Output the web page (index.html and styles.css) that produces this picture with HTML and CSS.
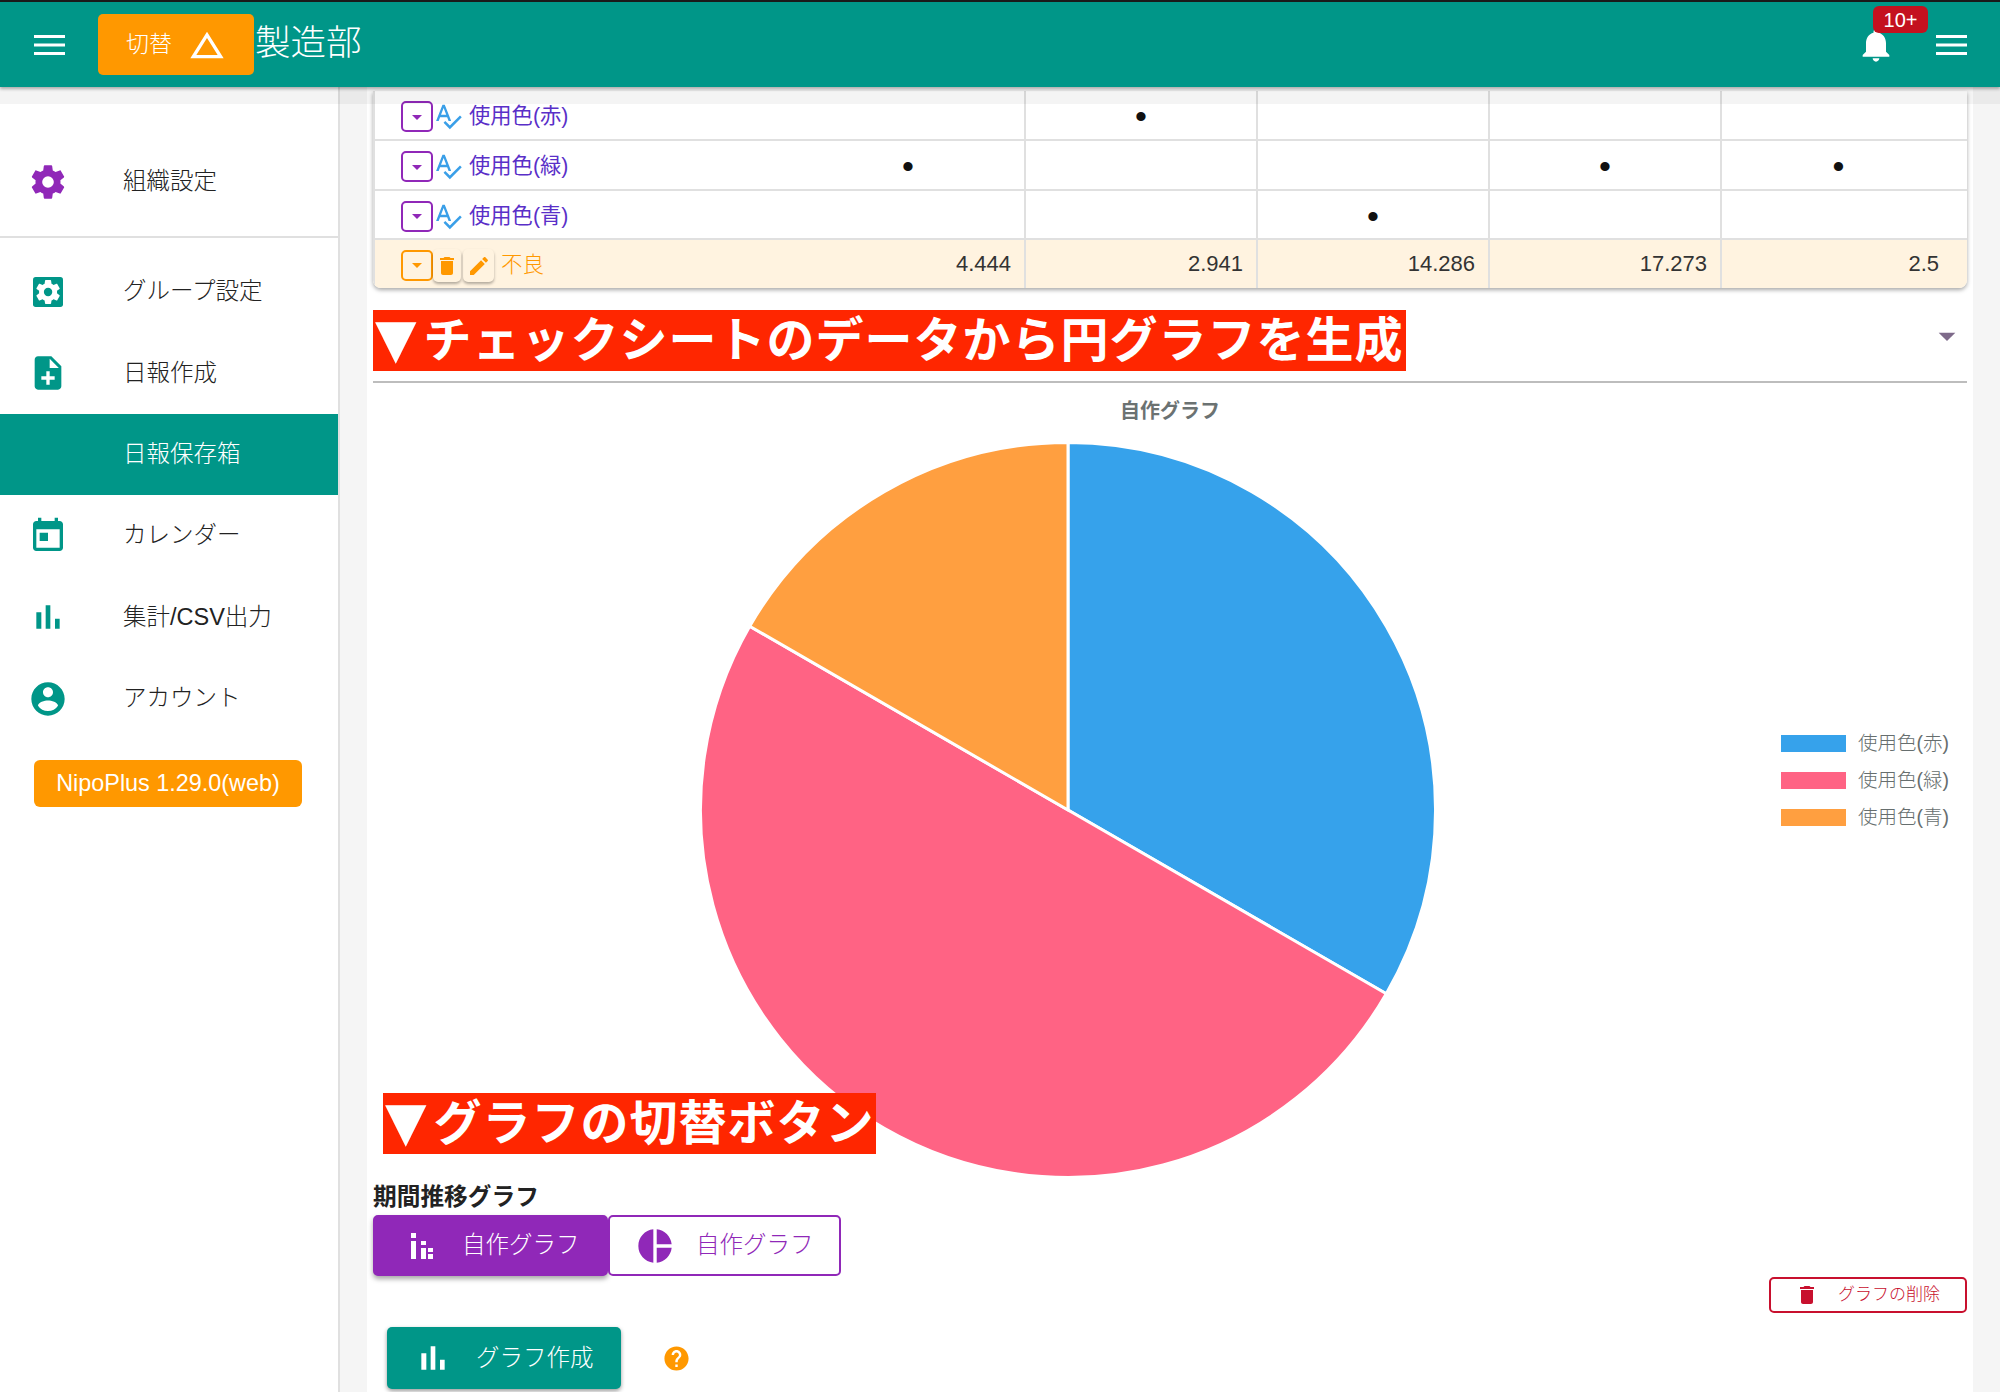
FILE: index.html
```html
<!DOCTYPE html>
<html lang="ja">
<head>
    <meta charset="UTF-8">
    <title>NipoPlus 日報保存箱</title>
    <link rel="stylesheet" href="styles.css">
</head>
<body>
    <svg class="defs">
        <symbol id="i-cog" viewBox="0 0 24 24"><path d="M12,15.5A3.5,3.5 0 0,1 8.5,12A3.5,3.5 0 0,1 12,8.5A3.5,3.5 0 0,1 15.5,12A3.5,3.5 0 0,1 12,15.5M19.43,12.97C19.47,12.65 19.5,12.33 19.5,12C19.5,11.67 19.47,11.34 19.43,11L21.54,9.37C21.73,9.22 21.78,8.95 21.66,8.73L19.66,5.27C19.54,5.05 19.27,4.96 19.05,5.05L16.56,6.05C16.04,5.66 15.5,5.32 14.87,5.07L14.5,2.42C14.46,2.18 14.25,2 14,2H10C9.75,2 9.54,2.18 9.5,2.42L9.13,5.07C8.5,5.32 7.96,5.66 7.44,6.05L4.95,5.05C4.73,4.96 4.46,5.05 4.34,5.27L2.34,8.73C2.21,8.95 2.27,9.22 2.46,9.37L4.57,11C4.53,11.34 4.5,11.67 4.5,12C4.5,12.33 4.53,12.65 4.57,12.97L2.46,14.63C2.27,14.78 2.21,15.05 2.34,15.27L4.34,18.73C4.46,18.95 4.73,19.03 4.95,18.95L7.44,17.94C7.96,18.34 8.5,18.68 9.13,18.93L9.5,21.58C9.54,21.82 9.75,22 10,22H14C14.25,22 14.46,21.82 14.5,21.58L14.87,18.93C15.5,18.67 16.04,18.34 16.56,17.94L19.05,18.95C19.27,19.03 19.54,18.95 19.66,18.73L21.66,15.27C21.78,15.05 21.73,14.78 21.54,14.63L19.43,12.97Z"/></symbol>
        <symbol id="i-cogbox" viewBox="0 0 24 24"><rect x="3" y="3" width="18" height="18" rx="1.6"/><g transform="translate(3.4 3.4) scale(.72)"><path fill="#fff" d="M12,15.5A3.5,3.5 0 0,1 8.5,12A3.5,3.5 0 0,1 12,8.5A3.5,3.5 0 0,1 15.5,12A3.5,3.5 0 0,1 12,15.5M19.43,12.97C19.47,12.65 19.5,12.33 19.5,12C19.5,11.67 19.47,11.34 19.43,11L21.54,9.37C21.73,9.22 21.78,8.95 21.66,8.73L19.66,5.27C19.54,5.05 19.27,4.96 19.05,5.05L16.56,6.05C16.04,5.66 15.5,5.32 14.87,5.07L14.5,2.42C14.46,2.18 14.25,2 14,2H10C9.75,2 9.54,2.18 9.5,2.42L9.13,5.07C8.5,5.32 7.96,5.66 7.44,6.05L4.95,5.05C4.73,4.96 4.46,5.05 4.34,5.27L2.34,8.73C2.21,8.95 2.27,9.22 2.46,9.37L4.57,11C4.53,11.34 4.5,11.67 4.5,12C4.5,12.33 4.53,12.65 4.57,12.97L2.46,14.63C2.27,14.78 2.21,15.05 2.34,15.27L4.34,18.73C4.46,18.95 4.73,19.03 4.95,18.95L7.44,17.94C7.96,18.34 8.5,18.68 9.13,18.93L9.5,21.58C9.54,21.82 9.75,22 10,22H14C14.25,22 14.46,21.82 14.5,21.58L14.87,18.93C15.5,18.67 16.04,18.34 16.56,17.94L19.05,18.95C19.27,19.03 19.54,18.95 19.66,18.73L21.66,15.27C21.78,15.05 21.73,14.78 21.54,14.63L19.43,12.97Z"/></g></symbol>
        <symbol id="i-note" viewBox="0 0 24 24"><path d="M14 2H6c-1.1 0-1.99.9-1.99 2L4 20c0 1.1.89 2 1.99 2H18c1.1 0 2-.9 2-2V8l-6-6zm2 14h-3v3h-2v-3H8v-2h3v-3h2v3h3v2zm-3-7V3.5L18.5 9H13z"/></symbol>
        <symbol id="i-event" viewBox="0 0 24 24"><path d="M19 3h-1V1h-2v2H8V1H6v2H5c-1.11 0-1.99.9-1.99 2L3 19c0 1.1.89 2 2 2h14c1.1 0 2-.9 2-2V5c0-1.1-.9-2-2-2zm0 16H5V8h14v11zM7 10h5v5H7z"/></symbol>
        <symbol id="i-bars" viewBox="0 0 24 24"><path d="M5 9.2h3V19H5zM10.6 5h2.8v14h-2.8zm5.6 8H19v6h-2.8z"/></symbol>
        <symbol id="i-account" viewBox="0 0 24 24"><path d="M12 2C6.48 2 2 6.48 2 12s4.48 10 10 10 10-4.48 10-10S17.52 2 12 2zm0 3c1.66 0 3 1.34 3 3s-1.34 3-3 3-3-1.34-3-3 1.34-3 3-3zm0 14.2c-2.5 0-4.71-1.28-6-3.22.03-1.99 4-3.08 6-3.08 1.99 0 5.97 1.09 6 3.08-1.29 1.94-3.5 3.22-6 3.22z"/></symbol>
        <symbol id="i-bell" viewBox="0 0 24 24"><path d="M12 22c1.1 0 2-.9 2-2h-4c0 1.1.9 2 2 2zm6-6v-5c0-3.07-1.63-5.64-4.5-6.32V4c0-.83-.67-1.5-1.5-1.5s-1.5.67-1.5 1.5v.68C7.64 5.36 6 7.92 6 11v5l-2 2v1h16v-1l-2-2z"/></symbol>
        <symbol id="i-delta" viewBox="0 0 24 24"><path d="M12 7.77L18.39 18H5.61L12 7.77M12 4L2 20h20L12 4z"/></symbol>
        <symbol id="i-pie" viewBox="0 0 24 24"><path d="M11 2v20c-5.07-.5-9-4.79-9-10s3.93-9.5 9-10zm2.03 0v8.99H22c-.47-4.74-4.24-8.52-8.97-8.99zm0 11.01V22c4.74-.47 8.5-4.25 8.97-8.99h-8.97z"/></symbol>
        <symbol id="i-help" viewBox="0 0 24 24"><path d="M12 2C6.48 2 2 6.48 2 12s4.48 10 10 10 10-4.48 10-10S17.52 2 12 2zm1 17h-2v-2h2v2zm2.07-7.75l-.9.92C13.45 12.9 13 13.5 13 15h-2v-.5c0-1.1.45-2.1 1.17-2.83l1.24-1.26c.37-.36.59-.86.59-1.41 0-1.1-.9-2-2-2s-2 .9-2 2H8c0-2.21 1.79-4 4-4s4 1.79 4 4c0 .88-.36 1.68-.93 2.25z"/></symbol>
        <symbol id="i-trash" viewBox="0 0 24 24"><path d="M6 19c0 1.1.9 2 2 2h8c1.1 0 2-.9 2-2V7H6v12zM19 4h-3.5l-1-1h-5l-1 1H5v2h14V4z"/></symbol>
        <symbol id="i-pencil" viewBox="0 0 24 24"><path d="M3 17.25V21h3.75L17.81 9.94l-3.75-3.75L3 17.25zM20.71 7.04c.39-.39.39-1.02 0-1.41l-2.34-2.34c-.39-.39-1.02-.39-1.41 0l-1.83 1.83 3.75 3.75 1.83-1.83z"/></symbol>
        <symbol id="i-caret" viewBox="0 0 24 24"><path d="M7 10l5 5 5-5z"/></symbol>
        <symbol id="i-spell" viewBox="0 0 24 24"><path d="M21.59,11.59L13.5,19.68L9.83,16L8.42,17.41L13.5,22.5L23,13M6.43,11L8.5,5.5L10.57,11M12.45,16H14.54L9.43,3H7.57L2.46,16H4.55L5.67,13H11.31L12.45,16Z"/></symbol>
        <symbol id="i-menu" viewBox="0 0 31 20"><path d="M0 0h31v3H0zM0 8.500h31v3H0zM0 17h31v3H0z"/></symbol>
        <symbol id="i-stack" viewBox="0 0 22 26"><path d="M0 0h5v5H0zM0 8h5v18H0zM10 8h5v4h-5zM10 15h5v11h-5zM17 15h5v4h-5zM17 21h5v5h-5z"/></symbol>
    </svg>

    <header class="topbar">
        <svg class="burger"><use href="#i-menu"/></svg>
        <button class="switch-btn"><span class="lbl">切替</span><svg class="icon-40"><use href="#i-delta"/></svg></button>
        <div class="dept">製造部</div>
        <div class="topbar-right">
            <div class="bell">
                <svg class="icon-40"><use href="#i-bell"/></svg>
                <span class="badge">10+</span>
            </div>
            <svg class="burger"><use href="#i-menu"/></svg>
        </div>
    </header>

    <div class="layout">
        <aside class="sidenav">
            <a class="nav-item"><svg class="icon-40 purple"><use href="#i-cog"/></svg><span class="lbl">組織設定</span></a>
            <div class="nav-divider"></div>
            <a class="nav-item"><svg class="icon-40"><use href="#i-cogbox"/></svg><span class="lbl">グループ設定</span></a>
            <a class="nav-item"><svg class="icon-40"><use href="#i-note"/></svg><span class="lbl">日報作成</span></a>
            <a class="nav-item active"><span class="icon-40"></span><span class="lbl">日報保存箱</span></a>
            <a class="nav-item"><svg class="icon-40"><use href="#i-event"/></svg><span class="lbl">カレンダー</span></a>
            <a class="nav-item"><svg class="icon-40"><use href="#i-bars"/></svg><span class="lbl">集計/CSV出力</span></a>
            <a class="nav-item"><svg class="icon-40"><use href="#i-account"/></svg><span class="lbl">アカウント</span></a>
            <div class="version">NipoPlus 1.29.0(web)</div>
        </aside>

        <main class="main">
            <div class="content">
                <div class="sheet">
                    <table class="sheet-table">
                        <colgroup>
                            <col class="col-label"><col class="col-num"><col class="col-num"><col class="col-num"><col class="col-num"><col class="col-last">
                        </colgroup>
                        <tr>
                            <td class="label-cell">
                                <div class="label-wrap">
                                    <span class="caret-box"><svg class="icon-24"><use href="#i-caret"/></svg></span>
                                    <svg class="icon-30 spell"><use href="#i-spell"/></svg>
                                    <span class="item-name">使用色(赤)</span>
                                </div>
                            </td>
                            <td class="no-line"></td>
                            <td class="dot">•</td>
                            <td></td>
                            <td></td>
                            <td></td>
                        </tr>
                        <tr>
                            <td class="label-cell">
                                <div class="label-wrap">
                                    <span class="caret-box"><svg class="icon-24"><use href="#i-caret"/></svg></span>
                                    <svg class="icon-30 spell"><use href="#i-spell"/></svg>
                                    <span class="item-name">使用色(緑)</span>
                                </div>
                            </td>
                            <td class="no-line dot">•</td>
                            <td></td>
                            <td></td>
                            <td class="dot">•</td>
                            <td class="dot">•</td>
                        </tr>
                        <tr class="short">
                            <td class="label-cell">
                                <div class="label-wrap">
                                    <span class="caret-box"><svg class="icon-24"><use href="#i-caret"/></svg></span>
                                    <svg class="icon-30 spell"><use href="#i-spell"/></svg>
                                    <span class="item-name">使用色(青)</span>
                                </div>
                            </td>
                            <td class="no-line"></td>
                            <td></td>
                            <td class="dot">•</td>
                            <td></td>
                            <td></td>
                        </tr>
                        <tr class="short total">
                            <td class="label-cell">
                                <div class="label-wrap">
                                    <span class="caret-box"><svg class="icon-24"><use href="#i-caret"/></svg></span>
                                    <span class="mini-btn"><svg class="icon-24"><use href="#i-trash"/></svg></span>
                                    <span class="mini-btn wide"><svg class="icon-24"><use href="#i-pencil"/></svg></span>
                                    <span class="total-name">不良</span>
                                </div>
                            </td>
                            <td class="no-line num">4.444</td>
                            <td class="num">2.941</td>
                            <td class="num">14.286</td>
                            <td class="num">17.273</td>
                            <td class="num end">2.5</td>
                        </tr>
                    </table>
                </div>

                <div class="section-head">
                    <svg class="icon-40 fold"><use href="#i-caret"/></svg>
                </div>

                <div class="chart">
                    <div class="chart-title">自作グラフ</div>
                    <div class="chart-body">
                        <!-- 2:3:1, starts at 12 o'clock -->
                        <svg class="pie" viewBox="-370 -370 740 740">
                            <path d="M0 0V-367.500A367.500 367.500 0 0 1 318.300 183.750Z" fill="#36a2eb" stroke="#fff" stroke-width="3"/>
                            <path d="M0 0L318.300 183.750A367.500 367.500 0 0 1 -318.300 -183.750Z" fill="#ff6384" stroke="#fff" stroke-width="3"/>
                            <path d="M0 0L-318.300 -183.750A367.500 367.500 0 0 1 0 -367.500Z" fill="#ff9f40" stroke="#fff" stroke-width="3"/>
                        </svg>
                        <ul class="legend">
                            <li><span class="swatch blue"></span><span class="lbl">使用色(赤)</span></li>
                            <li><span class="swatch pink"></span><span class="lbl">使用色(緑)</span></li>
                            <li><span class="swatch orange"></span><span class="lbl">使用色(青)</span></li>
                        </ul>
                    </div>
                </div>

                <div class="graph-label">期間推移グラフ</div>
                <div class="graph-tabs">
                    <button class="tab on"><svg class="icon-stack"><use href="#i-stack"/></svg><span class="lbl">自作グラフ</span></button>
                    <button class="tab"><svg class="icon-40"><use href="#i-pie"/></svg><span class="lbl">自作グラフ</span></button>
                </div>
                <div class="delete-row">
                    <button class="delete-btn"><svg class="icon-24"><use href="#i-trash"/></svg><span class="lbl">グラフの削除</span></button>
                </div>
                <div class="create-row">
                    <button class="create-btn"><svg class="icon-40"><use href="#i-bars"/></svg><span class="lbl">グラフ作成</span></button>
                    <svg class="help"><use href="#i-help"/></svg>
                </div>

                <div class="note note-top"><span class="tri">▼</span>チェックシートのデータから円グラフを生成</div>
                <div class="note note-bottom"><span class="tri">▼</span>グラフの切替ボタン</div>
            </div>
        </main>
    </div>
</body>
</html>
```

FILE: styles.css
```css
* {
    box-sizing: border-box;
}
html, body {
    margin: 0;
    height: 1392px;
    overflow: hidden;
}
body {
    font-family: "Liberation Sans", "Noto Sans CJK JP", sans-serif;
    font-weight: 300;
    font-size: 23.500px;
    color: #222;
    background: #fff;
}
button {
    font: inherit;
    cursor: pointer;
}
svg {
    fill: currentColor;
    flex: none;
    display: block;
}
.defs {
    display: none;
}
.icon-24 {
    width: 24px;
    height: 24px;
}
.icon-30 {
    width: 30px;
    height: 30px;
}
.icon-40 {
    width: 40px;
    height: 40px;
    flex: none;
    display: block;
}
.purple {
    color: #9028b8;
}
/* kana sit a little high next to the icons */
.lbl {
    margin-bottom: 5px;
}

/* top bar */
.topbar {
    position: relative;
    z-index: 5;
    height: 87px;
    padding: 0 33px 0 34px;
    display: flex;
    align-items: center;
    color: #fff;
    background: #009688;
    border-top: 2px solid #1a1a1a;
    box-shadow: 0 2px 3px rgba(0, 0, 0, 0.3), 0 17px 0 rgba(0, 0, 0, 0.045);
}
.burger {
    width: 31px;
    height: 20px;
}
.switch-btn {
    width: 156px;
    height: 61px;
    margin-left: 33px;
    padding: 0 0 0 28px;
    display: flex;
    align-items: center;
    gap: 15px;
    font-size: 23px;
    color: #fff;
    background: #ff9800;
    border: none;
    border-radius: 5px;
}
.dept {
    margin: 0 0 10px 1px;
    font-size: 35.500px;
}
.topbar-right {
    margin-left: auto;
    display: flex;
    align-items: center;
    gap: 40px;
}
.bell {
    position: relative;
    height: 40px;
}
.badge {
    position: absolute;
    left: 17px;
    top: -19px;
    width: 55px;
    height: 27px;
    line-height: 29px;
    text-align: center;
    font-size: 20px;
    background: #c4111f;
    border-radius: 6px;
}

.layout {
    display: flex;
    height: 1305px;
}

/* side menu */
.sidenav {
    width: 340px;
    flex: none;
    padding-top: 54px;
    background: #fff;
    border-right: 2px solid #e0e0e0;
}
.nav-item {
    height: 81.400px;
    padding-left: 28px;
    display: flex;
    align-items: center;
    gap: 55px;
    color: #009688;
}
.nav-item .lbl {
    color: #222;
}
.nav-item.active {
    background: #009688;
}
.nav-item.active .lbl {
    color: #fff;
}
.nav-item .purple {
    color: #9028b8;
}
.nav-divider {
    height: 2px;
    margin: 14px 0 12.600px;
    background: #e0e0e0;
}
.version {
    width: 268px;
    height: 47px;
    margin: 21px 0 0 34px;
    line-height: 47px;
    text-align: center;
    font-size: 23.400px;
    color: #fff;
    background: #ff9800;
    border-radius: 6px;
}

/* main column */
.main {
    flex: 1;
    padding: 0 27px;
    background: #f5f5f5;
}
.content {
    position: relative;
    height: 100%;
    padding: 4px 6px 0;
    background: #fff;
    overflow: hidden;
}

/* check sheet */
.sheet {
    border-radius: 0 0 8px 8px;
    box-shadow: 0 2px 4px rgba(0, 0, 0, 0.35);
    overflow: hidden;
}
.sheet-table {
    width: 1594px;
    table-layout: fixed;
    border-collapse: separate;
    border-spacing: 0;
}
.col-label {
    width: 419px;
}
.col-num {
    width: 232px;
}
.col-last {
    width: 247px;
}
.sheet-table td {
    height: 50px;
    padding: 0 13px 0 0;
    border-left: 2px solid #e0e0e0;
    border-bottom: 2px solid #e0e0e0;
}
.sheet-table .short td {
    height: 49px;
}
.sheet-table .total td {
    height: 48px;
    background: #fff3e0;
    border-bottom: none;
}
.sheet-table td.label-cell {
    padding: 0 0 0 26px;
}
.sheet-table td.no-line {
    border-left: none;
}
.sheet-table .dot {
    padding: 2px 0 0;
    text-align: center;
    font-size: 34px;
    line-height: 40px;
    color: #111;
}
.sheet-table .dot:last-child {
    padding-right: 12px;
}
.sheet-table .num {
    text-align: right;
    font-size: 22px;
    color: #333;
}
.sheet-table td.end {
    padding-right: 28px;
}
.label-wrap {
    display: flex;
    align-items: center;
}
.caret-box {
    width: 32px;
    height: 31px;
    margin-top: 3px;
    display: flex;
    align-items: center;
    justify-content: center;
    color: #9028b8;
    border: 2px solid #9028b8;
    border-radius: 5px;
}
.spell {
    margin-top: 2px;
    color: #3a9fe8;
}
.item-name {
    margin: 0 0 3px 6px;
    font-size: 21.300px;
    font-weight: 400;
    color: #5a2fc8;
}
.total .caret-box {
    margin-top: 2px;
    color: #ff9800;
    border-color: #ff9800;
}
.mini-btn {
    width: 28px;
    height: 33px;
    margin: 3px 0 0;
    display: flex;
    align-items: center;
    justify-content: center;
    color: #ff9800;
    border-radius: 5px;
    box-shadow: 0 2px 3px rgba(0, 0, 0, 0.3);
}
.mini-btn.wide {
    width: 31px;
    margin-left: 2px;
}
.total-name {
    margin: 0 0 3px 7px;
    font-size: 21.500px;
    color: #ff9800;
}

/* chart */
.section-head {
    height: 95px;
    padding-top: 28px;
    display: flex;
    justify-content: flex-end;
    border-bottom: 2px solid #bdbdbd;
}
.fold {
    color: #7e6a8a;
}
.chart-title {
    margin-top: 16px;
    line-height: 24px;
    text-align: center;
    font-size: 20px;
    font-weight: 700;
    color: #6b7272;
}
.chart-body {
    display: flex;
    padding-top: 17px;
}
.pie {
    width: 740px;
    height: 740px;
    margin-left: 325px;
}
.legend {
    margin: 285px 0 0 auto;
    padding: 0 18px 0 0;
    list-style: none;
    font-size: 19.500px;
    color: #666e6e;
}
.legend li {
    height: 37px;
    display: flex;
    align-items: center;
    gap: 12px;
}
.swatch {
    width: 65px;
    height: 17px;
}
.blue {
    background: #36a2eb;
}
.pink {
    background: #ff6384;
}
.orange {
    background: #ff9f40;
}

/* buttons below the chart */
.graph-label {
    margin-top: 2px;
    line-height: 30px;
    font-size: 23.700px;
    font-weight: 700;
    color: #222;
}
.graph-tabs {
    margin-top: 3px;
    display: flex;
}
.tab {
    width: 233px;
    height: 61px;
    padding: 0 0 0 25px;
    display: flex;
    align-items: center;
    gap: 21px;
    color: #9028b8;
    background: #fff;
    border: 2px solid #9028b8;
    border-radius: 5px;
}
.tab.on {
    width: 235px;
    padding-left: 36px;
    gap: 29px;
    color: #fff;
    background: #9028b8;
    box-shadow: 0 3px 5px rgba(0, 0, 0, 0.35);
}
.icon-stack {
    width: 22px;
    height: 26px;
}
.delete-row {
    margin-top: 1px;
    display: flex;
    justify-content: flex-end;
}
.delete-btn {
    width: 198px;
    height: 36px;
    padding: 0 0 0 24px;
    display: flex;
    align-items: center;
    gap: 19px;
    font-size: 17px;
    color: #c8102e;
    background: #fff;
    border: 2px solid #c8102e;
    border-radius: 5px;
}
.create-row {
    margin: 14px 0 0 14px;
    display: flex;
    align-items: center;
    gap: 41px;
}
.create-btn {
    width: 234px;
    height: 62px;
    padding: 0 0 0 26px;
    display: flex;
    align-items: center;
    gap: 23px;
    color: #fff;
    background: #009688;
    border: none;
    border-radius: 5px;
    box-shadow: 0 2px 4px rgba(0, 0, 0, 0.4);
}
.help {
    width: 29px;
    height: 29px;
    color: #ff9800;
}

/* red notes pasted over the screen */
.note {
    position: absolute;
    height: 61px;
    line-height: 62px;
    padding-left: 2px;
    font-size: 48px;
    font-weight: 700;
    letter-spacing: 1px;
    white-space: nowrap;
    color: #fff;
    background: #ff2600;
}
.tri {
    margin-right: 7px;
    font-family: "DejaVu Sans", sans-serif;
    font-size: 54px;
    font-weight: 400;
    line-height: 0;
    letter-spacing: 0;
}
.note-top {
    left: 6px;
    top: 223px;
    width: 1033px;
}
.note-bottom {
    left: 16px;
    top: 1006px;
    width: 493px;
}
```
